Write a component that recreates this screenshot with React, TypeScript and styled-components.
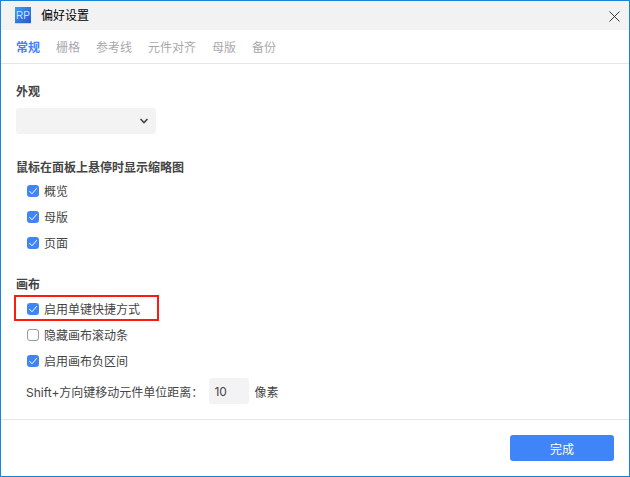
import React from 'react'
import styled, { createGlobalStyle } from 'styled-components'

const GlobalStyle = createGlobalStyle`
  html, body {
    margin: 0;
    padding: 0;
    background: #fff;
  }
  *, *::after {
    box-sizing: border-box;
  }
`

const Window = styled.div`
  width: 630px;
  height: 477px;
  border: 1px solid #1883d7;
  display: flex;
  flex-direction: column;
  background: #fff;
  font-family: 'Inter', 'Noto Sans CJK SC', sans-serif;
  color: #444;
`

const TitleBar = styled.div`
  height: 29px;
  flex: none;
  background: #f2f2f2;
  display: flex;
  align-items: center;
  padding-left: 14px;
  gap: 10px;
`

const Title = styled.span`
  font-size: 12px;
  line-height: 18px;
  padding-top: 1px;
  color: #000;
  flex: 1;
`

const CloseButton = styled.button`
  width: 11px;
  height: 11px;
  margin: 1px 9px 0 0;
  padding: 0;
  border: 0;
  background: none;
  display: flex;
`

const Tabs = styled.div`
  height: 34px;
  flex: none;
  display: flex;
  align-items: center;
  gap: 16px;
  padding-left: 15px;
  border-bottom: 1px solid #e5e5e5;
`

const Tab = styled.span<{ $active?: boolean }>`
  font-size: 12px;
  font-weight: ${(p) => (p.$active ? 700 : 400)};
  color: ${(p) => (p.$active ? '#3f85f8' : '#a9a9ad')};
`

const Content = styled.div`
  flex: 1;
  padding: 19px 15px 0;
  display: flex;
  flex-direction: column;
`

const Section = styled.section<{ $gap?: number }>`
  margin-bottom: ${(p) => p.$gap ?? 0}px;
`

const Heading = styled.h3`
  margin: 0;
  height: 16px;
  line-height: 18px;
  font-size: 12px;
  font-weight: 700;
  color: #444;
`

const SelectBox = styled.div`
  margin-top: 9px;
  width: 140px;
  height: 26px;
  background: #f3f3f3;
  border-radius: 3px;
  display: flex;
  align-items: center;
  justify-content: flex-end;
  padding-right: 7px;
`

const CheckList = styled.div<{ $top: number }>`
  margin-top: ${(p) => p.$top}px;
  padding-left: 11px;
  display: flex;
  flex-direction: column;
`

const CheckRow = styled.label<{ $marked?: boolean }>`
  position: relative;
  height: 26px;
  display: flex;
  align-items: center;
  gap: 5px;
  font-size: 12px;
  color: #444;

  ${(p) =>
    p.$marked &&
    `
    &::after {
      content: '';
      position: absolute;
      left: -13px;
      top: 0;
      width: 145px;
      height: 26px;
      border: 2px solid #ff1a10;
    }
  `}
`

const Box = styled.span<{ $checked?: boolean }>`
  width: 12px;
  height: 12px;
  margin-top: 2px;
  border-radius: 3px;
  display: flex;
  align-items: center;
  justify-content: center;
  background: ${(p) => (p.$checked ? '#3f85f8' : '#fff')};
  border: ${(p) => (p.$checked ? 'none' : '1px solid #999')};
`

const DistanceRow = styled.div`
  margin-top: 5px;
  padding-left: 10px;
  display: flex;
  align-items: center;
  font-size: 12px;
  color: #444;
`

const NumberBox = styled.div`
  width: 40px;
  height: 26px;
  margin: 0 5px 0 6px;
  padding-left: 5px;
  background: #f3f3f3;
  border-radius: 3px;
  display: flex;
  align-items: center;
`

const Footer = styled.div`
  height: 57px;
  flex: none;
  border-top: 1px solid #e5e5e5;
  display: flex;
  justify-content: flex-end;
  padding: 15px 15px 0 0;
`

const DoneButton = styled.button`
  width: 104px;
  height: 26px;
  border: 0;
  border-radius: 3px;
  background: #3f85f8;
  color: #fff;
  font-family: inherit;
  font-size: 12px;
`

const Check = ({ checked, label, marked }: { checked?: boolean; label: string; marked?: boolean }) => (
  <CheckRow $marked={marked}>
    <Box $checked={checked}>
      {checked && (
        <svg width="10" height="10" viewBox="0 0 10 10" fill="none">
          <path d="M1.3 5 L4 7.8 L8.8 2.2" stroke="#fff" strokeWidth="1" />
        </svg>
      )}
    </Box>
    {label}
  </CheckRow>
)

const tabs = ['常规', '栅格', '参考线', '元件对齐', '母版', '备份']

export default function App() {
  return (
    <>
      <GlobalStyle />
      <Window>
        <TitleBar>
          <svg width="16" height="17" viewBox="0 0 16 17">
            <defs>
              <linearGradient id="logo" x1="0" y1="0" x2="1" y2="1">
                <stop offset="0" stopColor="#3aa0f0" />
                <stop offset="1" stopColor="#2a55d0" />
              </linearGradient>
            </defs>
            <rect width="16" height="16" fill="url(#logo)" />
            <rect y="16" width="16" height="1" fill="#c9d3ea" />
            <text x="8" y="12" textAnchor="middle" fontSize="10" fill="#cfe0fb" fontFamily="Liberation Sans">
              RP
            </text>
          </svg>
          <Title>偏好设置</Title>
          <CloseButton>
            <svg width="11" height="11" viewBox="0 0 11 11">
              <path d="M0.5 0.5 L10.5 10.5 M10.5 0.5 L0.5 10.5" stroke="#333" strokeWidth="1" />
            </svg>
          </CloseButton>
        </TitleBar>
        <Tabs>
          {tabs.map((t, i) => (
            <Tab key={t} $active={i === 0}>
              {t}
            </Tab>
          ))}
        </Tabs>
        <Content>
          <Section $gap={25}>
            <Heading>外观</Heading>
            <SelectBox>
              <svg width="10" height="6" viewBox="0 0 10 6" fill="none">
                <path d="M1.5 1 L5 4.5 L8.5 1" stroke="#444" strokeWidth="1.6" />
              </svg>
            </SelectBox>
          </Section>
          <Section $gap={21}>
            <Heading>鼠标在面板上悬停时显示缩略图</Heading>
            <CheckList $top={2}>
              <Check checked label="概览" />
              <Check checked label="母版" />
              <Check checked label="页面" />
            </CheckList>
          </Section>
          <Section>
            <Heading>画布</Heading>
            <CheckList $top={3}>
              <Check checked marked label="启用单键快捷方式" />
              <Check label="隐藏画布滚动条" />
              <Check checked label="启用画布负区间" />
            </CheckList>
            <DistanceRow>
              Shift+方向键移动元件单位距离：
              <NumberBox>10</NumberBox>
              像素
            </DistanceRow>
          </Section>
        </Content>
        <Footer>
          <DoneButton>完成</DoneButton>
        </Footer>
      </Window>
    </>
  )
}
